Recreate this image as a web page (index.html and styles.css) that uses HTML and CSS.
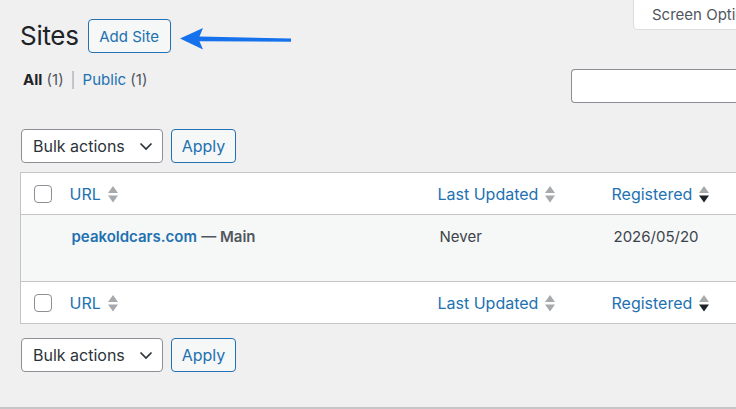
FILE: index.html
```html
<!DOCTYPE html>
<html lang="en">
<head>
<meta charset="utf-8">
<title>Sites</title>
<link rel="stylesheet" href="styles.css">
</head>
<body>
<div class="page">
  <div class="top">
    <div class="title-row">
      <h1 class="title">Sites</h1>
      <a class="btn add-site" href="#">Add Site</a>
      <svg class="arrow" width="112" height="22" viewBox="0 0 112 22"><path d="M0 10.5 L23 0 L19.5 8.6 L111 10.6 L111 13.8 L19.5 13.2 L23 21.5 Z" fill="#1672ec"/></svg>
    </div>
    <button class="screen-options">Screen Options <span class="caret">▾</span></button>
  </div>

  <div class="filter-row">
    <ul class="subsubsub">
      <li><span class="current">All</span> <span class="count">(1)</span></li>
      <li class="sep">|</li>
      <li><a href="#">Public</a> <span class="count">(1)</span></li>
    </ul>
    <div class="search-box"><div class="search-input"></div></div>
  </div>

  <div class="tablenav">
    <div class="select">
      <span>Bulk actions</span>
      <svg width="14" height="9" viewBox="0 0 14 9"><path d="M1.5 1.5 L7 7 L12.5 1.5" fill="none" stroke="#2c3338" stroke-width="1.7"/></svg>
    </div>
    <a class="btn apply" href="#">Apply</a>
  </div>

  <table class="list">
    <colgroup>
      <col class="c-cb"><col class="c-url"><col class="c-upd"><col class="c-reg">
    </colgroup>
    <thead>
      <tr>
        <th class="cb"><span class="checkbox"></span></th>
        <th><a class="sort" href="#">URL <svg class="sicon" width="10" height="17" viewBox="0 0 10 17"><path d="M0 7 L5 0 L10 7Z" fill="#a7aaad"/><path d="M0 9.5 L5 16.5 L10 9.5Z" fill="#a7aaad"/></svg></a></th>
        <th><a class="sort" href="#">Last Updated <svg class="sicon" width="10" height="17" viewBox="0 0 10 17"><path d="M0 7 L5 0 L10 7Z" fill="#a7aaad"/><path d="M0 9.5 L5 16.5 L10 9.5Z" fill="#a7aaad"/></svg></a></th>
        <th><a class="sort" href="#">Registered <svg class="sicon" width="10" height="17" viewBox="0 0 10 17"><path d="M0 7 L5 0 L10 7Z" fill="#a7aaad"/><path d="M0 9.5 L5 16.5 L10 9.5Z" fill="#1d2327"/></svg></a></th>
      </tr>
    </thead>
    <tbody>
      <tr class="alt">
        <td></td>
        <td class="site"><a href="#">peakoldcars.com</a> <span class="main">— Main</span></td>
        <td>Never</td>
        <td>2026/05/20</td>
      </tr>
    </tbody>
    <tfoot>
      <tr>
        <th class="cb"><span class="checkbox"></span></th>
        <th><a class="sort" href="#">URL <svg class="sicon" width="10" height="17" viewBox="0 0 10 17"><path d="M0 7 L5 0 L10 7Z" fill="#a7aaad"/><path d="M0 9.5 L5 16.5 L10 9.5Z" fill="#a7aaad"/></svg></a></th>
        <th><a class="sort" href="#">Last Updated <svg class="sicon" width="10" height="17" viewBox="0 0 10 17"><path d="M0 7 L5 0 L10 7Z" fill="#a7aaad"/><path d="M0 9.5 L5 16.5 L10 9.5Z" fill="#a7aaad"/></svg></a></th>
        <th><a class="sort" href="#">Registered <svg class="sicon" width="10" height="17" viewBox="0 0 10 17"><path d="M0 7 L5 0 L10 7Z" fill="#a7aaad"/><path d="M0 9.5 L5 16.5 L10 9.5Z" fill="#1d2327"/></svg></a></th>
      </tr>
    </tfoot>
  </table>

  <div class="tablenav bottom">
    <div class="select">
      <span>Bulk actions</span>
      <svg width="14" height="9" viewBox="0 0 14 9"><path d="M1.5 1.5 L7 7 L12.5 1.5" fill="none" stroke="#2c3338" stroke-width="1.7"/></svg>
    </div>
    <a class="btn apply" href="#">Apply</a>
  </div>

  <div class="footer-line"></div>
</div>
</body>
</html>
```

FILE: styles.css
```css
html, body {
  margin: 0;
  padding: 0;
  overflow: hidden;
  background: #f0f0f1;
}
body {
  font-family: Inter, "Liberation Sans", Arial, sans-serif;
  color: #3c434a;
  font-size: 15px;
}
a { text-decoration: none; color: #2271b1; }

.page {
  width: 800px;
  padding-left: 20px;
  box-sizing: border-box;
}

.top {
  display: flex;
  justify-content: space-between;
  align-items: flex-start;
  height: 53px;
}
.title-row {
  display: flex;
  align-items: center;
  margin-top: 19px;
  height: 34px;
}
.title {
  margin: 0;
  font-size: 26px;
  font-weight: 400;
  color: #1d2327;
  line-height: 34px;
  letter-spacing: -0.3px;
}
.btn {
  display: inline-flex;
  align-items: center;
  justify-content: center;
  box-sizing: border-box;
  height: 34px;
  border: 1px solid #2271b1;
  border-radius: 4px;
  background: #f6f7f7;
  color: #2271b1;
  font-size: 15px;
}
.add-site {
  margin-left: 9px;
  width: 83px;
}
.arrow {
  margin-left: 9px;
  margin-top: 5px;
}
.screen-options {
  width: 167px;
  height: 31px;
  margin-top: -1px;
  box-sizing: border-box;
  border: 1px solid #dcdcde;
  border-top: none;
  border-radius: 0 0 5px 5px;
  background: #fff;
  color: #50575e;
  font-family: inherit;
  font-size: 15px;
  text-align: left;
  padding: 0 0 0 18px;
}
.caret { font-size: 12px; }

.filter-row {
  display: flex;
  justify-content: space-between;
  align-items: flex-start;
  margin-top: 16px;
  height: 34px;
}
.subsubsub {
  list-style: none;
  margin: 0;
  padding: 0 0 0 3px;
  display: flex;
  gap: 6px;
  line-height: 22px;
  font-size: 15px;
  color: #50575e;
}
.subsubsub .current { font-weight: 700; color: #1d2327; }
.subsubsub .sep { color: #a7aaad; padding: 0 1px; }
.search-box { width: 229px; }
.search-input {
  box-sizing: border-box;
  height: 34px;
  border: 1px solid #8c8f94;
  border-right: none;
  border-radius: 4px 0 0 4px;
  background: #fff;
}

.tablenav {
  display: flex;
  align-items: center;
  gap: 8px;
  margin-top: 26px;
  height: 34px;
}
.tablenav.bottom { margin-top: 14px; }
.select {
  display: flex;
  align-items: center;
  justify-content: space-between;
  box-sizing: border-box;
  width: 142px;
  height: 34px;
  margin-left: 1px;
  padding: 0 9px 0 11px;
  border: 1px solid #8c8f94;
  border-radius: 4px;
  background: #fff;
  color: #2c3338;
  font-size: 16px;
}
.apply { width: 65px; font-size: 16px; }

.list {
  margin-top: 9px;
  width: 780px;
  border-collapse: collapse;
  table-layout: fixed;
  background: #fff;
  border: 1px solid #c3c4c7;
}
.c-cb { width: 40px; }
.c-url { width: 368px; }
.c-upd { width: 174px; }
.c-reg { width: 198px; }

.list th {
  height: 41px;
  padding: 0 0 0 9px;
  text-align: left;
  font-weight: 400;
  font-size: 16px;
  vertical-align: middle;
}
.list th.cb { padding-left: 13px; }
.list thead th { border-bottom: 1px solid #c3c4c7; }
.list tfoot th { border-top: 1px solid #c3c4c7; }
.sort {
  display: inline-flex;
  align-items: center;
  gap: 7px;
  color: #2271b1;
}
.sicon { margin-top: 1px; }
.checkbox {
  display: block;
  width: 18px;
  height: 18px;
  box-sizing: border-box;
  border: 1px solid #8c8f94;
  border-radius: 4px;
  background: #fff;
}

.list td {
  height: 67px;
  padding: 11px 0 0 11px;
  box-sizing: border-box;
  vertical-align: top;
  font-size: 15px;
  line-height: 22px;
  color: #3c434a;
}
.list tr.alt td { background: #f6f7f7; }
.site a { font-weight: 600; color: #2271b1; }
.site .main { font-weight: 600; color: #50575e; }

.footer-line {
  margin-top: 35px;
  margin-left: -20px;
  width: 800px;
  border-top: 2px solid #c6c6c8;
}
```
